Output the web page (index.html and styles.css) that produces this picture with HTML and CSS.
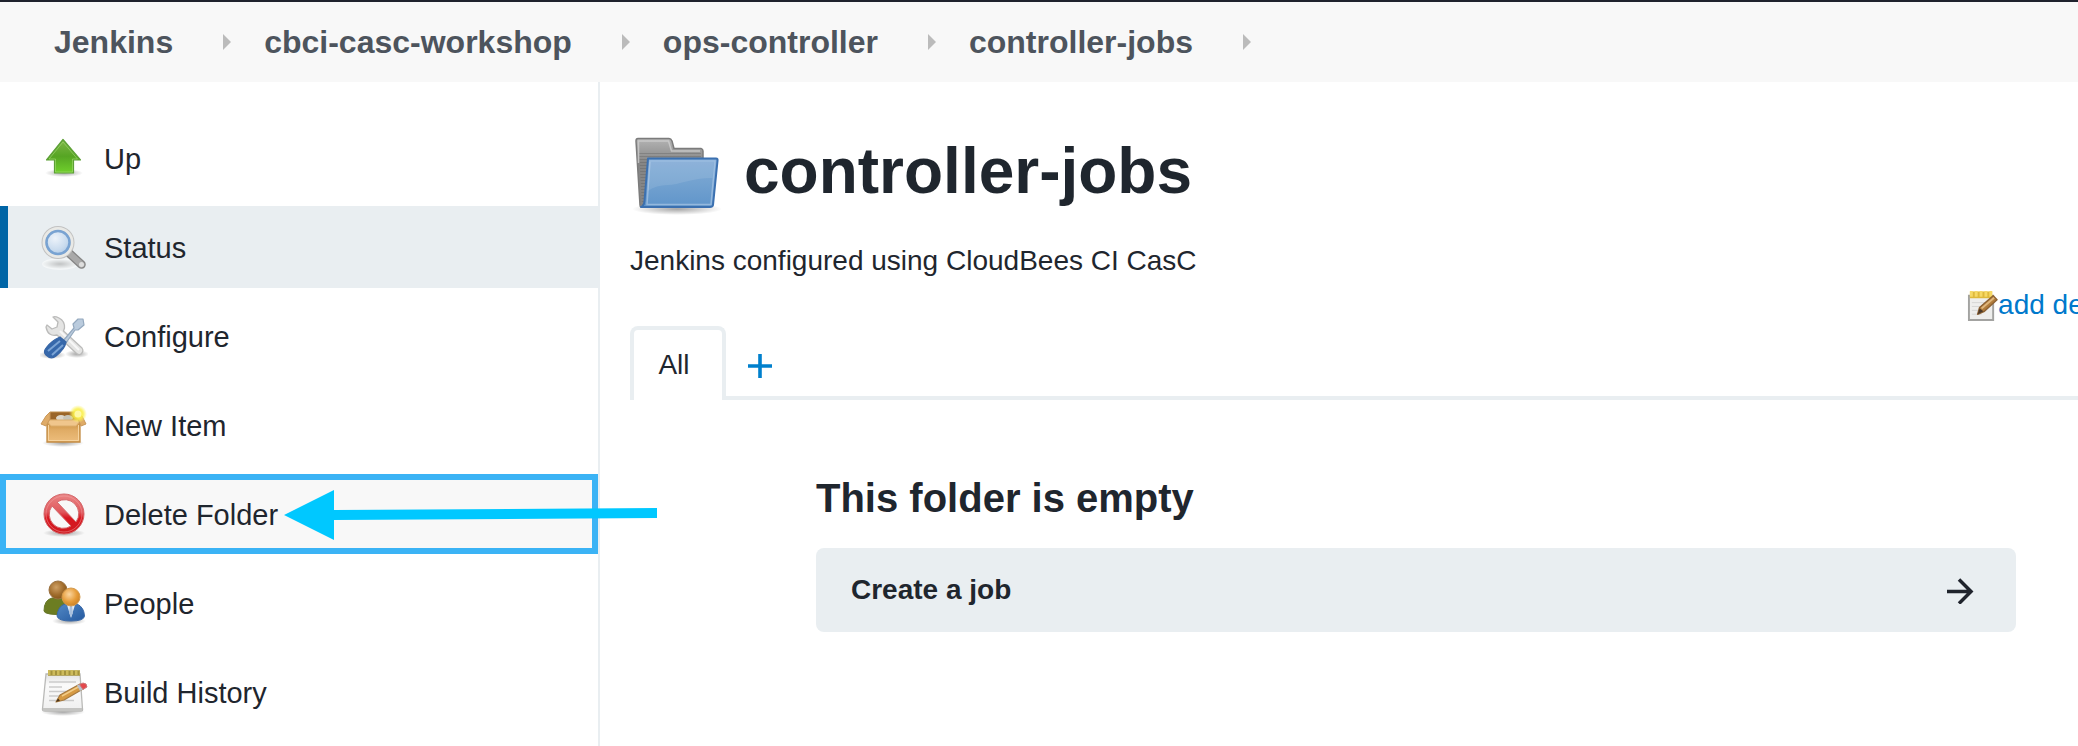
FILE: index.html
```
<!DOCTYPE html>
<html lang="en">
<head>
<meta charset="utf-8">
<title>controller-jobs [Jenkins]</title>
<link rel="stylesheet" href="styles.css">
</head>
<body>
<svg class="defs" width="0" height="0" aria-hidden="true">
  <defs>
    <linearGradient id="green" x1="0" y1="0" x2="0" y2="1"><stop offset="0" stop-color="#7fb648"/><stop offset=".5" stop-color="#56a523"/><stop offset="1" stop-color="#70d02c"/></linearGradient>
    <linearGradient id="red" x1="0" y1="0" x2="0" y2="1"><stop offset="0" stop-color="#ea8585"/><stop offset=".45" stop-color="#e0575c"/><stop offset=".6" stop-color="#d8161f"/><stop offset="1" stop-color="#cf1a20"/></linearGradient>
    <linearGradient id="blue" x1="0" y1="0" x2="0" y2="1"><stop offset="0" stop-color="#82abd6"/><stop offset=".5" stop-color="#73a2d0"/><stop offset="1" stop-color="#6095ca"/></linearGradient>
    <linearGradient id="grey" x1="0" y1="0" x2="0" y2="1"><stop offset="0" stop-color="#b4b4b4"/><stop offset=".35" stop-color="#868686"/><stop offset="1" stop-color="#858585"/></linearGradient>
    <linearGradient id="carton" x1="0" y1="0" x2="0" y2="1"><stop offset="0" stop-color="#c98f3e"/><stop offset=".4" stop-color="#e0ac65"/><stop offset="1" stop-color="#edbd7c"/></linearGradient>
    <linearGradient id="paper" x1="0" y1="0" x2="0" y2="1"><stop offset="0" stop-color="#e3e3e3"/><stop offset=".3" stop-color="#fafafa"/><stop offset="1" stop-color="#f0f0f0"/></linearGradient>
    <linearGradient id="suit" x1="0" y1="0" x2="1" y2="1"><stop offset="0" stop-color="#5288c4"/><stop offset="1" stop-color="#2459a0"/></linearGradient>
    <radialGradient id="lens" cx=".4" cy=".35" r=".7"><stop offset="0" stop-color="#edf3fa"/><stop offset=".6" stop-color="#c9dbee"/><stop offset="1" stop-color="#a4c3e4"/></radialGradient>
    <radialGradient id="tan" cx=".4" cy=".35" r=".7"><stop offset="0" stop-color="#fbd6a0"/><stop offset=".6" stop-color="#e69c39"/><stop offset="1" stop-color="#c97f25"/></radialGradient>
    <radialGradient id="brown" cx=".4" cy=".35" r=".7"><stop offset="0" stop-color="#cfa064"/><stop offset=".6" stop-color="#a06c2c"/><stop offset="1" stop-color="#835318"/></radialGradient>
    <radialGradient id="sun"><stop offset="0" stop-color="#fffcc0"/><stop offset=".35" stop-color="#fbee4c"/><stop offset=".6" stop-color="#faf04a" stop-opacity=".8"/><stop offset="1" stop-color="#fbf266" stop-opacity="0"/></radialGradient>
    <radialGradient id="shade"><stop offset="0" stop-color="#000" stop-opacity=".35"/><stop offset="1" stop-color="#000" stop-opacity="0"/></radialGradient>
    <pattern id="ribs" width="8" height="3" patternUnits="userSpaceOnUse"><rect width="8" height="1" fill="#5b5b5b" fill-opacity=".35"/></pattern>
  </defs>
</svg>

<header class="topbar">
  <nav class="breadcrumbs" aria-label="Breadcrumb">
    <a href="#">Jenkins</a><span class="chevron"></span>
    <a href="#">cbci-casc-workshop</a><span class="chevron"></span>
    <a href="#">ops-controller</a><span class="chevron"></span>
    <a href="#">controller-jobs</a><span class="chevron"></span>
  </nav>
</header>

<div class="page">
  <nav class="sidebar" aria-label="Folder">
    <a class="task" href="#">
      <svg class="task-icon" viewBox="0 0 48 48" aria-hidden="true">
        <ellipse cx="24" cy="38" rx="19" ry="4" fill="url(#shade)"/>
        <path d="M23 4.500 40.500 25H33.500V38H14.500V25H6.500Z" fill="url(#green)" stroke="#5ca036" stroke-width="1.200" stroke-linejoin="round"/>
        <path d="M23 7 37.500 24H32.500V37H15.500V24H9Z" fill="none" stroke="#a4da75" stroke-opacity=".6"/>
      </svg>Up</a>
    <a class="task task-active" href="#">
      <svg class="task-icon" viewBox="0 0 48 48" aria-hidden="true">
        <ellipse cx="20" cy="40" rx="18" ry="6" fill="#fff" fill-opacity=".5"/>
        <ellipse cx="20" cy="40" rx="18" ry="5" fill="url(#shade)" opacity=".6"/>
        <path d="M29 29 41.500 40.500" stroke="#858585" stroke-width="8.500" stroke-linecap="round"/>
        <path d="M29 29 41.500 40.500" stroke="#a9a9a9" stroke-width="6" stroke-linecap="round"/>
        <circle cx="41.500" cy="40.500" r="2.500" fill="#dedede"/>
        <circle cx="18" cy="18.500" r="14" fill="url(#lens)" stroke="#c2c2c2" stroke-width="5"/>
        <circle cx="18" cy="18.500" r="14" fill="none" stroke="#e9e9e6" stroke-width="3"/>
        <circle cx="18" cy="18.500" r="11.500" fill="none" stroke="#79a3d2" stroke-width="2.500"/>
      </svg>Status</a>
    <a class="task" href="#">
      <svg class="task-icon" viewBox="0 0 48 48" aria-hidden="true">
        <ellipse cx="12" cy="42" rx="14" ry="4" fill="url(#shade)"/><ellipse cx="37" cy="41" rx="12" ry="4" fill="url(#shade)"/>
        <path d="M13 4Q15 3 19 5Q25 8 24.500 15L23.500 18 42 35Q44 38 41.500 40.500T36 40L17 22Q8 24 6 14L7 12 12 16 17 14 18 9Z" fill="#e4e4e3" stroke="#bbbbba" stroke-width="1.300" stroke-linejoin="round"/>
        <path d="M20 18 39 37" stroke="#f7f7f7" stroke-width="2"/>
        <path d="M23 28 34 15 33 11 38 6 43 6 44 12 38 17 35 17 26 30Z" fill="#bacbdd" stroke="#93a8be" stroke-width="1.200" stroke-linejoin="round"/>
        <path d="M20 24 26 29Q25 36 16 43Q11 47 6 42Q3 39 6 35Q11 28 20 24Z" fill="#3668ab" stroke="#3866a6" stroke-width="1.200"/>
        <path d="M8 38 20 28M12 42 23 32" stroke="#7ba4d5" stroke-width="2"/>
      </svg>Configure</a>
    <a class="task" href="#">
      <svg class="task-icon" viewBox="0 0 48 48" aria-hidden="true">
        <ellipse cx="23" cy="41" rx="21" ry="4" fill="url(#shade)"/>
        <path d="M10 10H37L42 18H6Z" fill="#9a6528" stroke="#c18f4c"/>
        <ellipse cx="21" cy="16" rx="5" ry="3" fill="#ddd7ca"/><ellipse cx="28" cy="16" rx="5" ry="3" fill="#c8c5b8"/>
        <path d="M7 20H40V40H7Z" fill="url(#carton)" stroke="#c28b43" stroke-width="1.300"/>
        <path d="M8.500 23V38.500H38.500V23" fill="none" stroke="#f7d49f"/>
        <path d="M6 18H41L36 24H11Z" fill="#f0c68c" stroke="#dcae6d"/>
        <path d="M10 10 6 14 1 22 6 24 10 17Z" fill="#dfab67" stroke="#c9985a"/>
        <path d="M37 10 42 14 46 22 41 24 38 17Z" fill="#dfab67" stroke="#c9985a"/>
        <circle cx="38" cy="12" r="9" fill="url(#sun)"/><circle cx="38" cy="12" r="3.500" fill="#fff9a6"/>
      </svg>New Item</a>
    <a class="task task-marked" href="#">
      <svg class="task-icon" viewBox="0 0 48 48" aria-hidden="true">
        <ellipse cx="24" cy="42" rx="21" ry="4" fill="url(#shade)"/>
        <path fill-rule="evenodd" d="M24 3A20 20 0 1 0 24 43A20 20 0 1 0 24 3ZM17 11A14 14 0 0 1 36 31ZM12 15 31 35A14 14 0 0 1 12 15Z" fill="url(#red)" stroke="#d4686b" stroke-width="1"/>
        <circle cx="24" cy="23" r="18" fill="none" stroke="#f3aaab" stroke-opacity=".45"/>
      </svg>Delete Folder
      <svg class="pointer" viewBox="0 0 374 50" aria-hidden="true">
        <path d="M0 25 50 0V20L373 18V28L50 30V50Z" fill="#00c8ff"/>
      </svg></a>
    <a class="task" href="#">
      <svg class="task-icon" viewBox="0 0 48 48" aria-hidden="true">
        <ellipse cx="29" cy="41" rx="17" ry="4" fill="url(#shade)"/>
        <path d="M4 31Q4 20 12 18H23Q28 22 27 32Q18 36 10 34Q4 33 4 31Z" fill="#6c7d22" stroke="#66762a"/>
        <circle cx="18" cy="10" r="9" fill="url(#brown)" stroke="#9a7140"/>
        <path d="M17 36Q18 26 25 24H37Q44 27 44.500 36Q44 41 31 41Q18 41 17 36Z" fill="url(#suit)" stroke="#3b6aa9"/>
        <path d="M27 25 31 38 35 25Z" fill="#e4ecf5"/><path d="M30 26H32L33 33 31 37 29 33Z" fill="#a9c0dd"/>
        <circle cx="31" cy="17" r="9" fill="url(#tan)" stroke="#d49a4c"/>
      </svg>People</a>
    <a class="task" href="#">
      <svg class="task-icon" viewBox="0 0 48 48" aria-hidden="true">
        <ellipse cx="23" cy="43" rx="22" ry="4" fill="url(#shade)"/>
        <path d="M6 5H40L42.500 40Q43 42 41 42H5Q2 42 2.500 40Z" fill="url(#paper)" stroke="#b9b9b7" stroke-width="1.300"/>
        <path d="M3 39H42V42H3Z" fill="#c4c4c2"/>
        <path d="M9 13H36M9 18H22M9 22.500H34M9 27H26M9 31.500H34" stroke="#cbcbcb" stroke-width="1.600"/>
        <path d="M8 4H40" stroke="#a4933c" stroke-width="5.500"/><path d="M8 3.500H40" stroke="#cdbb5c" stroke-width="5" stroke-dasharray="2.500 2"/>
        <path d="M16 33 20 26 40 15 43 20 24 31Z" fill="#d69a43" stroke="#a67a40" stroke-width="1.200" stroke-linejoin="round"/>
        <path d="M22 27 40 17" stroke="#f2cc87" stroke-width="1.500"/>
        <path d="M37 16.500 40 22 43 20.500 40 15Z" fill="#b9c1cc"/>
        <path d="M39.500 15.500 43 14Q47 14 47 18L43 20.500Z" fill="#e4484c" stroke="#cb797b"/>
        <path d="M16 33 18 29.500 20 31.500Z" fill="#49331c"/>
      </svg>Build History</a>
  </nav>

  <main class="main">
    <div class="content">
      <div class="title">
        <svg class="folder" viewBox="0 0 96 96" aria-hidden="true">
          <ellipse cx="47" cy="86" rx="45" ry="6" fill="url(#shade)"/>
          <path d="M8 15.500H39Q41 15.500 42 18L44 25.500H71Q73 26 73 28V50L20 84H11Q10 84 10 82L6 18Q6 15.500 8 15.500Z" fill="url(#grey)" stroke="#7b7b7b" stroke-width="1.500"/>
          <path d="M9 28H71V50L20 83H12Z" fill="url(#ribs)"/>
          <path d="M8.500 40V18H38.500L41.500 28H70" fill="none" stroke="#cecece" stroke-opacity=".8" stroke-width="1.500"/>
          <path d="M18 35.500H86Q88 35.500 87.500 38L83 82Q82.500 84 80 84H11Q14 83 14.500 78Z" fill="url(#blue)" stroke="#3b70b0" stroke-width="2" stroke-linejoin="round"/>
          <path d="M20 38H85L81 81.500H17Z" fill="none" stroke="#a9c6e5" stroke-opacity=".7" stroke-width="1.500"/>
          <path d="M19 39H84L82.500 55C62 55 48 62 38 62Q26 62 17.500 68Z" fill="#fff" fill-opacity=".1"/>
        </svg>
        <h1>controller-jobs</h1>
      </div>
      <p class="description">Jenkins configured using CloudBees CI CasC</p>
      <div class="actions">
        <a class="edit" href="#">
          <svg class="edit-icon" viewBox="0 0 32 32" aria-hidden="true">
            <path d="M2 6H27V31H2Z" fill="#eeeeec" stroke="#a3a3a1" stroke-width="2"/>
            <path d="M5 13H22M5 17H19M5 21H13M5 25H15" stroke="#d6d6d4"/>
            <path d="M3 5H26" stroke="#dfb93c" stroke-width="7"/><path d="M3 4H26" stroke="#f6d966" stroke-width="6" stroke-dasharray="3 2"/>
            <path d="M11 25 13 18 27 6 31 10 18 22Z" fill="#b17c3b" stroke="#8d6233" stroke-width="1.500" stroke-linejoin="round"/>
            <path d="M15 19 28 8" stroke="#dfb67b" stroke-width="2"/><path d="M11 25 13 19 17 22Z" fill="#4b3a2a"/>
          </svg>add description</a>
      </div>
      <div class="tabs">
        <a class="tab" href="#">All</a>
        <a class="tab-new" href="#" aria-label="New view">
          <svg class="plus" viewBox="0 0 24 24" aria-hidden="true"><path d="M12 0V24M0 12H24" stroke="#0080cd" stroke-width="3.600"/></svg>
        </a>
      </div>
      <section class="empty">
        <h2>This folder is empty</h2>
        <a class="card" href="#">Create a job
          <svg class="arrow" viewBox="0 0 28 28" aria-hidden="true"><path d="M1 15.500H25M13 3.500 25 15.500 13 27.500" fill="none" stroke="#1f232c" stroke-width="3.500"/></svg>
        </a>
      </section>
    </div>
  </main>
</div>
</body>
</html>
```
FILE: styles.css
```
* { box-sizing: border-box; }

body {
  margin: 0;
  min-height: 100vh;
  display: flex;
  flex-direction: column;
  overflow-x: hidden;
  background: #fff;
  color: #1f262e;
  font-family: "Liberation Sans", Arial, sans-serif;
  font-size: 28px;
  line-height: 40px;
}

a { color: inherit; text-decoration: none; }
h1, h2, p { margin: 0; }
svg { display: block; flex: none; }
.defs { position: absolute; }

.topbar {
  border-top: 2px solid #1f222d;
  background: #f8f8f8;
}

.breadcrumbs {
  display: flex;
  align-items: center;
  padding: 20px 54px;
  color: #4d545d;
  font-size: 32px;
  font-weight: bold;
}

.chevron {
  margin: 0 33px 0 50px;
  border: solid transparent;
  border-width: 8px 0 8px 8px;
  border-left-color: #bbb;
}

.page {
  display: flex;
  flex: 1;
}

.sidebar {
  display: flex;
  flex: none;
  flex-direction: column;
  gap: 7px;
  width: 600px;
  padding-top: 35px;
  border-right: 2px solid #e9eef1;
}

.task {
  position: relative;
  display: flex;
  align-items: center;
  gap: 16px;
  height: 82px;
  padding: 2px 0 0 40px;
  font-size: 29px;
}

.task-icon { width: 48px; height: 48px; }

.task-active {
  background: #e9eef1;
  box-shadow: inset 8px 0 #0065a6;
}

.task-marked {
  height: 80px;
  margin: 1px 0;
  background: #f8f8f8;
  box-shadow: inset 0 0 0 6px #3bb3f5;
}

.pointer {
  position: absolute;
  z-index: 1;
  top: 16px;
  left: 284px;
  width: 374px;
  height: 50px;
}

.main {
  flex: 1;
  min-width: 0;
  padding: 41px 0 40px 30px;
}

/* The view area runs on past the right edge of the window. */
.content { margin-right: -124px; }

.title {
  display: flex;
  align-items: center;
  gap: 18px;
}

.folder { width: 96px; height: 96px; }

h1 {
  font-size: 64px;
  line-height: 72px;
}

.description { margin-top: 22px; }

.actions {
  display: flex;
  justify-content: flex-end;
  padding: 4px 14px 1px 0;
}

.edit {
  display: flex;
  align-items: center;
  color: #0079cc;
}

.edit-icon { width: 31px; height: 31px; }

.tabs {
  display: flex;
  height: 74px;
  box-shadow: inset 0 -4px #e9eef1;
}

.tab {
  display: flex;
  align-items: center;
  justify-content: center;
  width: 96px;
  padding-right: 8px;
  border: 4px solid #e9eef1;
  border-bottom: 0;
  border-radius: 8px 8px 0 0;
  background: #fff;
}

.tab-new {
  display: flex;
  align-items: center;
  padding: 6px 22px 0;
}

.plus { width: 24px; height: 24px; }

.empty {
  max-width: 1200px;
  margin: 74px auto 0;
}

h2 {
  font-size: 40px;
  line-height: 48px;
}

.card {
  display: flex;
  align-items: center;
  justify-content: space-between;
  margin-top: 26px;
  padding: 22px 42px 22px 35px;
  border-radius: 8px;
  background: #e9eef1;
  font-weight: bold;
}

.arrow { width: 28px; height: 28px; }
```
